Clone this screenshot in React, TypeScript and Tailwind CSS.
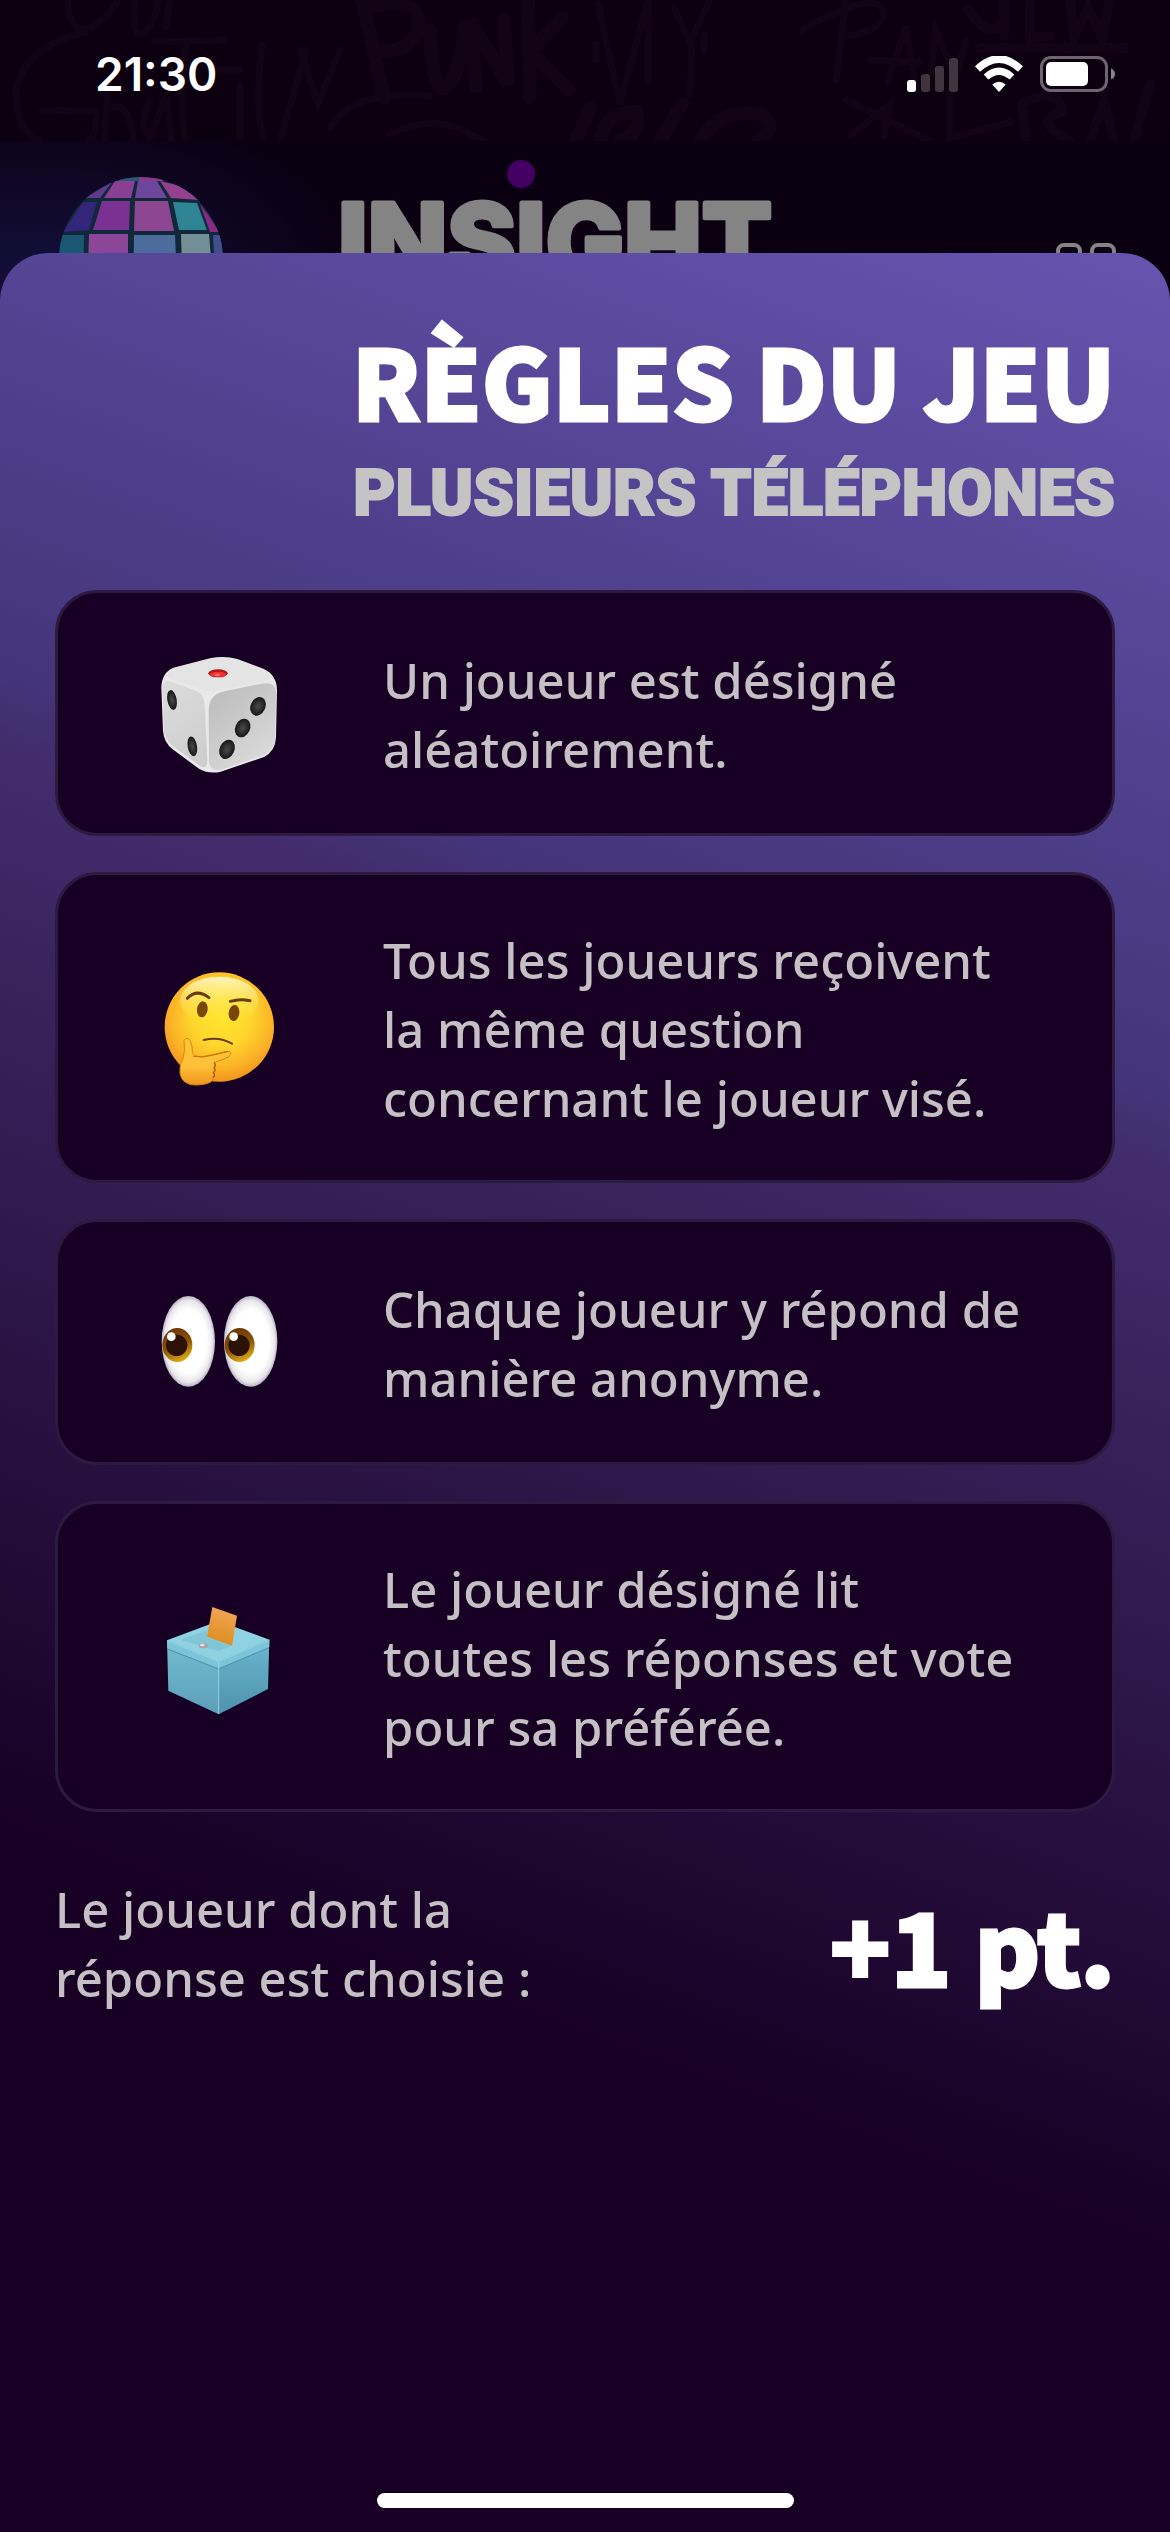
import type { ReactNode } from 'react'

interface Rule {
  icon: ReactNode
  text: string
}

const RULES: Rule[] = [
  { icon: <DiceIcon />, text: 'Un joueur est désigné\naléatoirement.' },
  { icon: <ThinkingIcon />, text: 'Tous les joueurs reçoivent\nla même question\nconcernant le joueur visé.' },
  { icon: <EyesIcon />, text: 'Chaque joueur y répond de\nmanière anonyme.' },
  { icon: <BallotIcon />, text: 'Le joueur désigné lit\ntoutes les réponses et vote\npour sa préférée.' },
]

function DiceIcon() {
  return (
    <svg viewBox="54 66 426 426" className="size-[142px]" role="img" aria-label="Dé">
      <defs>
        <linearGradient id="diceLeft" x1="0" y1="0" x2="0.4" y2="1">
          <stop offset="0" stopColor="#dcdcdc" />
          <stop offset="1" stopColor="#cfcfcf" />
        </linearGradient>
        <linearGradient id="diceRight" x1="0" y1="0" x2="0.6" y2="1">
          <stop offset="0" stopColor="#b9b9b9" />
          <stop offset="1" stopColor="#dadada" />
        </linearGradient>
        <radialGradient id="dicePip">
          <stop offset="0" stopColor="#4a4a4a" />
          <stop offset="0.6" stopColor="#2c2c2c" />
          <stop offset="1" stopColor="#161616" />
        </radialGradient>
      </defs>
      <path d="M94 205Q94 158 130 143L240 115Q283 106 322 117L400 146Q440 164 441 210L438 352Q436 394 402 411L272 455Q238 463 208 447L128 388Q101 366 99 332Z" fill="#e9e9e9" />
      <path d="M112 165Q122 147 145 141L245 116Q283 109 318 119L398 149Q416 157 424 172Q410 184 370 190L262 211Q234 219 214 208L130 179Q108 173 112 165Z" fill="#e4e4e4" />
      <path d="M97 208Q98 177 120 184L200 213Q222 222 224 254L232 425Q231 449 210 438L133 382Q104 361 102 330Z" fill="url(#diceLeft)" />
      <path d="M236 270Q238 222 284 214L395 191Q437 185 438 215L436 350Q434 388 400 406L274 449Q240 457 237 424Z" fill="url(#diceRight)" />
      <ellipse cx="264" cy="160" rx="29" ry="12" fill="#b5161a" />
      <ellipse cx="264" cy="163" rx="24" ry="8" fill="#f0322e" />
      <ellipse cx="262" cy="164" rx="8" ry="3" fill="#ff8478" />
      <ellipse cx="126" cy="240" rx="14" ry="30" transform="rotate(-10 126 240)" fill="url(#dicePip)" />
      <ellipse cx="187" cy="379" rx="14" ry="30" transform="rotate(-10 187 379)" fill="url(#dicePip)" />
      <ellipse cx="384" cy="259" rx="22" ry="29" transform="rotate(25 384 259)" fill="url(#dicePip)" />
      <ellipse cx="338" cy="324" rx="22" ry="29" transform="rotate(25 338 324)" fill="url(#dicePip)" />
      <ellipse cx="291" cy="388" rx="22" ry="30" transform="rotate(25 291 388)" fill="url(#dicePip)" />
    </svg>
  )
}

function ThinkingIcon() {
  return (
    <svg viewBox="54 49 426 426" className="size-[142px]" role="img" aria-label="Réflexion">
      <defs>
        <radialGradient id="faceSide" cx="0.52" cy="0.4" r="0.62">
          <stop offset="0" stopColor="#ffe62e" />
          <stop offset="0.45" stopColor="#ffd52c" />
          <stop offset="0.78" stopColor="#fbb026" />
          <stop offset="1" stopColor="#f08f1e" />
        </radialGradient>
        <linearGradient id="faceShine" x1="0" y1="0" x2="0" y2="1">
          <stop offset="0" stopColor="#fffbd0" stopOpacity="0.9" />
          <stop offset="1" stopColor="#ffe62e" stopOpacity="0" />
        </linearGradient>
        <linearGradient id="hand" x1="0" y1="0" x2="0" y2="1">
          <stop offset="0" stopColor="#ffc733" />
          <stop offset="0.6" stopColor="#ffc038" />
          <stop offset="1" stopColor="#ee9519" />
        </linearGradient>
      </defs>
      <circle cx="268" cy="259" r="164" fill="url(#faceSide)" />
      <ellipse cx="268" cy="180" rx="118" ry="72" fill="url(#faceShine)" />
      <ellipse cx="217" cy="206" rx="16" ry="24" transform="rotate(8 217 206)" fill="#7a4608" />
      <ellipse cx="312" cy="217" rx="16" ry="24" transform="rotate(8 312 217)" fill="#7a4608" />
      <path d="M172 173Q200 143 237 171" fill="none" stroke="#6b3d06" strokeWidth="9" strokeLinecap="round" />
      <path d="M301 182Q330 173 360 180" fill="none" stroke="#6b3d06" strokeWidth="9" strokeLinecap="round" />
      <path d="M221 298Q268 286 306 309" fill="none" stroke="#6b3d06" strokeWidth="6" strokeLinecap="round" />
      <path d="M162 300Q172 286 181 301Q189 320 187 335Q192 349 215 348Q246 344 288 332Q303 330 302 341Q300 349 286 353L252 366Q258 374 252 381Q257 389 250 396Q256 404 249 410Q253 419 242 424Q225 433 195 433Q156 432 150 398Q147 372 160 350Q166 330 162 300Z" fill="url(#hand)" stroke="#d98312" strokeWidth="3" strokeLinejoin="round" />
      <path d="M190 347Q215 353 246 344L294 333" fill="none" stroke="#c96f0c" strokeWidth="3" strokeLinecap="round" />
      <path d="M252 366Q260 374 252 381Q259 389 250 396Q258 404 249 410" fill="none" stroke="#a85a0a" strokeWidth="4" />
    </svg>
  )
}

function EyesIcon() {
  return (
    <svg viewBox="54 33 426 426" className="size-[142px]" role="img" aria-label="Yeux">
      <defs>
        <radialGradient id="eyeball">
          <stop offset="0.7" stopColor="#ffffff" />
          <stop offset="0.9" stopColor="#e9e7ec" />
          <stop offset="1" stopColor="#b9b4c2" />
        </radialGradient>
        <linearGradient id="iris" x1="0.2" y1="0" x2="0.6" y2="1">
          <stop offset="0" stopColor="#6a3405" />
          <stop offset="0.55" stopColor="#8a5206" />
          <stop offset="1" stopColor="#e0ac12" />
        </linearGradient>
      </defs>
      {[0, 187].map(dx => (
        <g key={dx} transform={`translate(${dx} 0)`}>
          <ellipse cx="175" cy="244" rx="80" ry="136" fill="url(#eyeball)" />
          <ellipse cx="142" cy="255" rx="45" ry="51" fill="url(#iris)" />
          <circle cx="140" cy="256" r="32" fill="#2b1204" />
          <circle cx="124" cy="230" r="13" fill="#ffffff" />
        </g>
      ))}
    </svg>
  )
}

function BallotIcon() {
  return (
    <svg viewBox="54 17 426 426" className="size-[142px]" role="img" aria-label="Urne">
      <defs>
        <linearGradient id="boxLeft" x1="0" y1="0" x2="0" y2="1">
          <stop offset="0" stopColor="#74bdd2" />
          <stop offset="1" stopColor="#5b9fb8" />
        </linearGradient>
        <linearGradient id="boxRight" x1="0" y1="0" x2="0" y2="1">
          <stop offset="0" stopColor="#6db7cd" />
          <stop offset="1" stopColor="#4d92ad" />
        </linearGradient>
        <linearGradient id="ballot" x1="0.6" y1="0" x2="0.4" y2="1">
          <stop offset="0" stopColor="#f3a659" />
          <stop offset="1" stopColor="#dc8c1c" />
        </linearGradient>
      </defs>
      <path d="M111 180L266 240L266 402L115 331Z" fill="url(#boxLeft)" />
      <path d="M418 178L266 240L266 402L414 326Z" fill="url(#boxRight)" />
      <path d="M111 180L265 122L418 178L266 242Z" fill="#8fd3e2" />
      <path d="M111 180L266 242L418 178L418 200L266 264L112 204Z" fill="#7cc5d8" />
      <path d="M112 206L266 266L417 202" fill="none" stroke="#4f93ab" strokeWidth="3" />
      <path d="M111 181L266 243L418 179" fill="none" stroke="#98d5e4" strokeWidth="3" />
      <path d="M266 243V401" stroke="#9bd7e5" strokeWidth="3" />
      <path d="M150 178L232 150L232 172L306 196L266 212Z" fill="#6fb5c8" opacity="0.45" />
      <path d="M247 80L321 106L306 196L231 169Z" fill="url(#ballot)" />
      <ellipse cx="220" cy="196" rx="14" ry="8" fill="#a9a5a8" />
      <ellipse cx="217" cy="194" rx="7" ry="4" fill="#e7e2e0" />
    </svg>
  )
}

function StatusBar() {
  return (
    <div className="relative h-[141px] overflow-hidden bg-[#0c0010]">
      <Scribbles />
      <div className="relative flex items-start justify-between pt-[54px] pl-[95px] pr-[55px]">
        <time className='font-["Inter"] text-[46px] leading-10 font-semibold text-white'>21:30</time>
        <div className="flex h-10 items-center gap-[17px]">
          <svg viewBox="0 0 51 36" className="h-9 w-[51px]" aria-hidden="true">
            <rect x="0" y="24" width="9" height="12" rx="3" fill="#fff" />
            <rect x="14" y="18" width="9" height="18" rx="3" fill="#40353f" />
            <rect x="28" y="10" width="9" height="26" rx="3" fill="#40353f" />
            <rect x="42" y="2" width="9" height="34" rx="3" fill="#40353f" />
          </svg>
          <svg viewBox="0 0 48 36" className="h-9 w-12" aria-hidden="true">
            <path d="M2.500 13Q24 -7 45.500 13" fill="none" stroke="#fff" strokeWidth="7.5" />
            <path d="M11 21Q24 9.500 37 21" fill="none" stroke="#fff" strokeWidth="7" />
            <path d="M24 36L17.300 28.500Q24 23 30.700 28.500Z" fill="#fff" />
          </svg>
          <svg viewBox="0 0 75 36" className="h-9 w-[75px]" aria-hidden="true">
            <rect x="1.500" y="1.500" width="65" height="33" rx="9.500" fill="none" stroke="#6f6570" strokeWidth="3" />
            <rect x="6" y="6" width="42" height="24" rx="5" fill="#fff" />
            <path d="M71 12.500Q75 14 75 18T71 23.500Z" fill="#8b828c" />
          </svg>
        </div>
      </div>
    </div>
  )
}

// Faint tag-style strokes on the wall behind the status bar
function Scribbles() {
  return (
    <svg
      viewBox="0 0 1170 141"
      preserveAspectRatio="none"
      className="absolute inset-0 size-full"
      fill="none"
      stroke="#120414"
      strokeWidth="7"
      strokeLinecap="round"
      aria-hidden="true"
    >
      <path d="M68 0Q68 34 90 28Q112 14 118 0M135 0Q132 36 142 34Q156 24 158 0M170 0L166 26" />
      <path d="M85 32Q22 48 16 92Q16 132 40 141M42 110L96 112Q98 134 88 141M108 84L104 141M112 108Q128 100 134 141M150 100Q138 124 150 138L166 96L172 141" />
      <path d="M154 42L224 40M186 44Q178 110 186 141M212 70H240M240 84V141M262 46Q254 110 264 141M306 50L280 141M300 50L318 104L340 50" />
      <path d="M330 128Q350 90 430 96M390 134Q440 108 490 146" />
      <g strokeWidth="14">
        <path d="M362 0L384 98M372 6Q430 -4 416 34Q404 54 380 50M430 30Q432 90 444 88Q462 76 464 26M476 86L470 20L508 84L504 20M528 0L530 98M562 18L530 52L570 90" />
        <path d="M576 141L590 108M600 141Q604 112 636 112Q642 134 620 141M660 141L682 104M700 141Q720 108 760 114Q780 126 758 141" />
      </g>
      <path d="M598 4L620 104L648 0V80M674 8L690 42L710 0M692 42L690 94M704 34V52M596 44V60" />
      <path d="M802 30Q880 -14 884 14Q880 32 846 36M846 0L836 80M888 82L906 26L916 90M870 60L920 62M930 80L936 30L956 78L966 40M846 100L932 142M850 136L890 104L884 136M950 90L950 138L1010 122" />
      <g strokeWidth="10">
        <path d="M968 10Q990 40 1000 24M1004 0V36M1030 4V38L1050 36M1070 0L1074 38L1088 8L1102 38L1110 0M980 48H1125M1026 141L1022 104Q1060 84 1062 112Q1030 120 1070 141M1090 141L1104 100L1114 141M1134 141L1150 84" />
      </g>
    </svg>
  )
}

function DiscoBall() {
  return (
    <svg viewBox="0 0 164 130" className="h-[130px] w-[164px]" aria-hidden="true">
      <defs>
        <clipPath id="ball">
          <circle cx="82" cy="83" r="82" />
        </clipPath>
      </defs>
      <g clipPath="url(#ball)">
        <rect width="164" height="130" fill="#10283a" />
        <path d="M68 0H80V5H58Z" fill="#275a78" />
        <path d="M80 0H104V5H80Z" fill="#8a3a86" />
        <path d="M56 5H76L72 22H45Z" fill="#8a3f93" />
        <path d="M79 5H98L108 22H76Z" fill="#6d479b" />
        <path d="M101 5L130 12L140 24L112 22Z" fill="#93408f" />
        <path d="M53 6L26 22H41Z" fill="#5f3a8c" />
        <path d="M24 26H38L30 54L4 56Z" fill="#33257a" />
        <path d="M43 25H71L70 54H34Z" fill="#7b3191" />
        <path d="M76 25H109L115 55H75Z" fill="#8c4590" />
        <path d="M114 26L138 27L148 54H120Z" fill="#2f8494" />
        <path d="M141 28L150 40L160 56H151Z" fill="#882a83" />
        <path d="M0 59H25L24 130H0Z" fill="#1b5672" />
        <path d="M30 58H69V130H28Z" fill="#8c4597" />
        <path d="M75 59H116L119 130H74Z" fill="#4c6c9c" />
        <path d="M122 58H150L156 130H124Z" fill="#718f94" />
        <path d="M154 59H164V130H158Z" fill="#41508c" />
      </g>
    </svg>
  )
}

function AppHeader() {
  return (
    <header className="flex h-40 items-start justify-between overflow-hidden bg-[#0b0012] bg-[radial-gradient(ellipse_320px_170px_at_40px_130px,#130f3a,transparent)] pr-[54px] pl-[59px]">
      <div className="flex items-start gap-[105px]">
        <div className="pt-[35px]">
          <DiscoBall />
        </div>
        <svg viewBox="0 0 460 160" className="h-40 w-[460px]" role="img" aria-label="Insight">
          <text
            x="10"
            y="138"
            fontFamily="Inter"
            fontSize="104"
            fontWeight="800"
            fill="#848484"
            stroke="#848484"
            strokeWidth="5"
            strokeLinejoin="round"
          >
            INSIGHT
          </text>
          <circle cx="193" cy="33" r="14" fill="#430062" />
        </svg>
      </div>
      <button type="button" aria-label="Menu" className="mt-[102px] grid grid-cols-2 gap-2">
        <span className="size-[26px] rounded-lg border-4 border-[#848484]" />
        <span className="size-[26px] rounded-lg border-4 border-[#848484]" />
        <span className="size-[26px] rounded-lg border-4 border-[#848484]" />
        <span className="size-[26px] rounded-lg border-4 border-[#848484]" />
      </button>
    </header>
  )
}

function RuleCard({ icon, text }: Rule) {
  return (
    <li className="flex min-h-[246px] items-center gap-[53px] rounded-[42px] border-3 border-[#2d1a40] bg-[#170024] px-[50px] py-[47px]">
      <div className="flex w-[222px] shrink-0 justify-center">{icon}</div>
      <p className="pt-1 text-[49px] leading-[69px] font-medium whitespace-pre-line">{text}</p>
    </li>
  )
}

export default function App() {
  return (
    <div className='flex min-h-screen flex-col bg-[#0b0012] font-["Noto_Sans",sans-serif] text-[#c4c0c4]'>
      <StatusBar />
      <AppHeader />

      {/* Feuille des règles, par-dessus l'accueil */}
      <main className="relative -mt-12 flex flex-1 flex-col rounded-t-[48px] bg-[linear-gradient(200deg,#6555b0_0%,#44357a_31%,#422c6c_34%,#170024_74%)] px-[55px] pt-[78px]">
        <div className="text-right">
          <h1 className='font-["Noto_Sans_CJK_JP",sans-serif] text-[97px] leading-[96px] font-black text-white [-webkit-text-stroke:3px_white]'>
            RÈGLES DU JEU
          </h1>
          <h2 className='mt-[30px] font-["Roboto",sans-serif] text-[65px] leading-[72px] font-black text-[#c4c4c4] [-webkit-text-stroke:2px_#c4c4c4]'>
            PLUSIEURS TÉLÉPHONES
          </h2>
        </div>

        <ul className="mt-[61px] flex flex-col gap-9">
          {RULES.map(rule => (
            <RuleCard key={rule.text} icon={rule.icon} text={rule.text} />
          ))}
        </ul>

        <div className="mt-[63px] flex items-center justify-between">
          <p className="text-[49px] leading-[69px] font-medium whitespace-pre-line">
            {'Le joueur dont la\nréponse est choisie :'}
          </p>
          <p className='font-["Noto_Sans_CJK_JP",sans-serif] text-[100px] leading-[96px] font-black text-white [-webkit-text-stroke:3px_white]'>
            +1 pt.
          </p>
        </div>

        <div className="mt-auto mb-6 h-[15px] w-[417px] self-center rounded-full bg-white" />
      </main>
    </div>
  )
}
